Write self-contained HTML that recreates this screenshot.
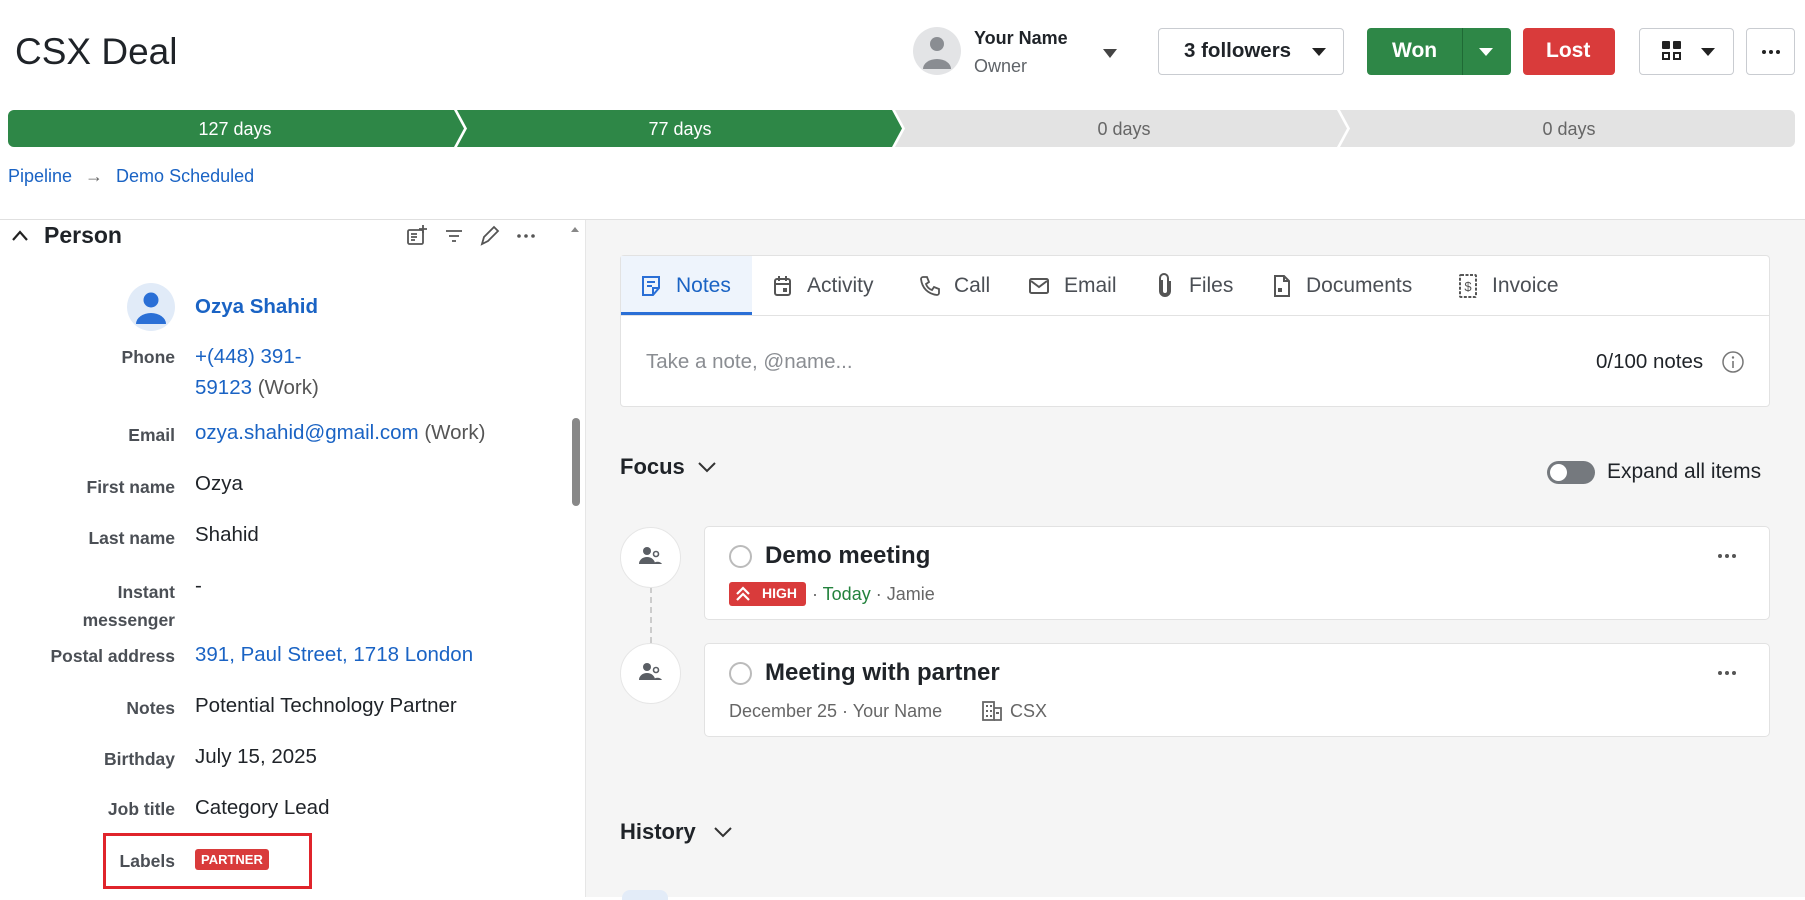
<!DOCTYPE html>
<html><head><meta charset="utf-8"><style>
*{box-sizing:border-box;margin:0;padding:0}
body{width:1805px;height:897px;overflow:hidden;font-family:"Liberation Sans",Arial,sans-serif;background:#fff;position:relative;color:#1f2328}
.a{position:absolute}
.btn{position:absolute;border:1px solid #c9ccd1;border-radius:4px;background:#fff}
.lbl{position:absolute;right:1630px;width:200px;text-align:right;font-size:17.5px;color:#4b4f55;font-weight:bold}
.val{position:absolute;left:195px;font-size:20.5px;color:#1f2328}
.blue{color:#1a63c4}
.tab{position:absolute;top:274px;font-size:21px;color:#4b4f55}
svg.i{position:absolute}
</style></head><body>
<div class="a" style="left:15px;top:31px;font-size:37px;color:#1f2328">CSX Deal</div>

<svg class="i" style="left:913px;top:27px" width="48" height="48" viewBox="0 0 48 48"><circle cx="24" cy="24" r="24" fill="#e3e4e6"/><circle cx="24" cy="17" r="7" fill="#8a8d92"/><path d="M10 42a14 10 0 0 1 28 0z" fill="#8a8d92"/></svg>
<div class="a" style="left:974px;top:28px;font-size:18px;font-weight:bold;color:#1f2328">Your Name</div>
<div class="a" style="left:974px;top:56px;font-size:18px;color:#5f6368">Owner</div>
<div class="a" style="left:1103px;top:49px;border-left:7px solid transparent;border-right:7px solid transparent;border-top:9px solid #444"></div>

<div class="btn" style="left:1158px;top:28px;width:186px;height:47px"></div>
<div class="a" style="left:1184px;top:39px;font-size:20.5px;font-weight:bold">3 followers</div>
<div class="a" style="left:1312px;top:48px;border-left:7px solid transparent;border-right:7px solid transparent;border-top:8px solid #222"></div>

<div class="a" style="left:1367px;top:28px;width:144px;height:47px;background:#2e8747;border-radius:4px"></div>
<div class="a" style="left:1462px;top:28px;width:1px;height:47px;background:#1f6a35"></div>
<div class="a" style="left:1392px;top:39px;font-size:21px;font-weight:bold;color:#fff">Won</div>
<div class="a" style="left:1479px;top:48px;border-left:7px solid transparent;border-right:7px solid transparent;border-top:8px solid #fff"></div>
<div class="a" style="left:1523px;top:28px;width:92px;height:47px;background:#d93b3b;border-radius:4px"></div>
<div class="a" style="left:1546px;top:39px;font-size:21px;font-weight:bold;color:#fff">Lost</div>

<div class="btn" style="left:1639px;top:28px;width:95px;height:47px"></div>
<svg class="i" style="left:1661px;top:40px" width="22" height="22" viewBox="0 0 22 22"><rect x="1" y="1" width="8" height="8" rx="1" fill="#222"/><rect x="12" y="1" width="8" height="8" rx="1" fill="#222"/><rect x="2" y="13" width="6" height="6" fill="none" stroke="#222" stroke-width="2"/><rect x="13" y="13" width="6" height="6" fill="none" stroke="#222" stroke-width="2"/></svg>
<div class="a" style="left:1701px;top:48px;border-left:7px solid transparent;border-right:7px solid transparent;border-top:8px solid #222"></div>
<div class="btn" style="left:1746px;top:28px;width:49px;height:47px"></div>
<svg class="i" style="left:1761px;top:49px" width="20" height="6" viewBox="0 0 20 6"><circle cx="3" cy="3" r="2" fill="#222"/><circle cx="10" cy="3" r="2" fill="#222"/><circle cx="17" cy="3" r="2" fill="#222"/></svg>

<svg class="i" style="left:8px;top:110px" width="1788" height="37" viewBox="0 0 1788 37">
<path d="M6 0H446L456 18.5L446 37H6A6 6 0 0 1 0 31V6A6 6 0 0 1 6 0Z" fill="#2e8747"/>
<path d="M449 0H884L894 18.5L884 37H449L459 18.5Z" fill="#2e8747"/>
<path d="M887 0H1329L1339 18.5L1329 37H887L897 18.5Z" fill="#e3e3e3"/>
<path d="M1332 0H1781A6 6 0 0 1 1787 6V31A6 6 0 0 1 1781 37H1332L1342 18.5Z" fill="#e3e3e3"/>
<text x="227" y="25" font-size="18" fill="#fff" text-anchor="middle" font-family="Liberation Sans">127 days</text>
<text x="672" y="25" font-size="18" fill="#fff" text-anchor="middle" font-family="Liberation Sans">77 days</text>
<text x="1116" y="25" font-size="18" fill="#666" text-anchor="middle" font-family="Liberation Sans">0 days</text>
<text x="1561" y="25" font-size="18" fill="#666" text-anchor="middle" font-family="Liberation Sans">0 days</text>
</svg>
<div class="a" style="left:8px;top:166px;font-size:18px;color:#1a63c4">Pipeline <span style="color:#666;margin:0 8px">→</span> Demo Scheduled</div>

<div class="a" style="left:0;top:219px;width:1805px;height:1px;background:#e0e0e0"></div>
<div class="a" style="left:585px;top:220px;width:1220px;height:677px;background:#f5f5f5;border-left:1px solid #e6e6e6"></div>

<!-- left panel -->
<svg class="i" style="left:10px;top:227px" width="20" height="16" viewBox="0 0 20 16"><path d="M3 13L10 5L17 13" fill="none" stroke="#222" stroke-width="2.2"/></svg>
<div class="a" style="left:44px;top:222px;font-size:23px;font-weight:bold">Person</div>
<svg class="i" style="left:406px;top:224px" width="135" height="24" viewBox="0 0 135 24">
<g fill="none" stroke="#555" stroke-width="1.8"><rect x="2" y="6" width="15" height="14" rx="1.5"/><path d="M5 10h6M5 13h6M5 16h4M17 1v8M13 5h8"/>
<path d="M40 7h16M43 12h10M46 17h4"/>
<path d="M76 20l2-7 10-10 4 4-10 10z"/></g>
<circle cx="113" cy="12" r="1.8" fill="#555"/><circle cx="120" cy="12" r="1.8" fill="#555"/><circle cx="127" cy="12" r="1.8" fill="#555"/></svg>
<div class="a" style="left:571px;top:227px;border-left:4px solid transparent;border-right:4px solid transparent;border-bottom:5px solid #888"></div>
<div class="a" style="left:572px;top:418px;width:8px;height:88px;background:#888;border-radius:4px"></div>

<svg class="i" style="left:127px;top:283px" width="48" height="48" viewBox="0 0 48 48"><circle cx="24" cy="24" r="24" fill="#e1ebf8"/><circle cx="24" cy="17" r="7.5" fill="#2a6fd6"/><path d="M9 41a15 11 0 0 1 30 0z" fill="#2a6fd6"/></svg>
<div class="val blue" style="top:295px;font-weight:bold;font-size:20.5px">Ozya Shahid</div>
<div class="lbl" style="top:347px">Phone</div>
<div class="val" style="top:341px;line-height:31px"><span class="blue">+(448) 391-<br>59123</span> <span style="color:#555">(Work)</span></div>
<div class="lbl" style="top:425px">Email</div>
<div class="val" style="top:421px"><span class="blue">ozya.shahid@gmail.com</span> <span style="color:#555">(Work)</span></div>
<div class="lbl" style="top:477px">First name</div><div class="val" style="top:472px">Ozya</div>
<div class="lbl" style="top:528px">Last name</div><div class="val" style="top:523px">Shahid</div>
<div class="lbl" style="top:578px;line-height:28px">Instant<br>messenger</div><div class="val" style="top:574px">-</div>
<div class="lbl" style="top:646px">Postal address</div><div class="val blue" style="top:643px">391, Paul Street, 1718 London</div>
<div class="lbl" style="top:698px">Notes</div><div class="val" style="top:694px">Potential Technology Partner</div>
<div class="lbl" style="top:749px">Birthday</div><div class="val" style="top:745px">July 15, 2025</div>
<div class="lbl" style="top:799px">Job title</div><div class="val" style="top:796px">Category Lead</div>
<div class="lbl" style="top:851px">Labels</div>
<div class="a" style="left:195px;top:849px;background:#d93b3b;color:#fff;font-size:13px;font-weight:bold;padding:3px 6px;border-radius:3px">PARTNER</div>
<div class="a" style="left:103px;top:833px;width:209px;height:56px;border:3px solid #e0242b"></div>

<!-- notes card -->
<div class="a" style="left:620px;top:255px;width:1150px;height:152px;background:#fff;border:1px solid #e2e2e2;border-radius:4px"></div>
<div class="a" style="left:621px;top:256px;width:131px;height:59px;background:#eef4fc;border-bottom:3px solid #2a6fd6"></div>
<div class="a" style="left:621px;top:315px;width:1148px;height:1px;background:#e2e2e2"></div>
<svg class="i" style="left:639px;top:274px" width="24" height="24" viewBox="0 0 24 24"><path d="M4 3h16v11l-6 7H4z M14 21v-7h6" fill="none" stroke="#2a6fd6" stroke-width="2"/><path d="M8 8h8M8 12h5" stroke="#2a6fd6" stroke-width="2"/></svg>
<div class="tab" style="left:676px;color:#1a63c4">Notes</div>
<svg class="i" style="left:771px;top:274px" width="24" height="24" viewBox="0 0 24 24"><g fill="none" stroke="#555" stroke-width="2"><rect x="4" y="5" width="15" height="16" rx="2"/><path d="M4 10h15M8 2v5M15 2v5"/></g><rect x="12" y="14" width="4" height="4" fill="#555"/></svg>
<div class="tab" style="left:807px">Activity</div>
<svg class="i" style="left:918px;top:274px" width="24" height="24" viewBox="0 0 24 24"><path d="M5 3l4 0 2 5-3 2c1 3 3 5 6 6l2-3 5 2v4c0 1-1 2-2 2C10 20 4 14 3 5c0-1 1-2 2-2z" fill="none" stroke="#555" stroke-width="1.8"/></svg>
<div class="tab" style="left:954px">Call</div>
<svg class="i" style="left:1027px;top:274px" width="24" height="24" viewBox="0 0 24 24"><g fill="none" stroke="#555" stroke-width="2"><rect x="3" y="5" width="18" height="14" rx="1.5"/><path d="M4 7l8 6 8-6"/></g></svg>
<div class="tab" style="left:1064px">Email</div>
<svg class="i" style="left:1153px;top:273px" width="24" height="26" viewBox="0 0 24 26"><path d="M9 7v11a3 3 0 0 0 6 0V5a4 4 0 0 0-8 0v13a5 5 0 0 0 10 0V8" fill="none" stroke="#555" stroke-width="2"/></svg>
<div class="tab" style="left:1189px">Files</div>
<svg class="i" style="left:1270px;top:274px" width="24" height="24" viewBox="0 0 24 24"><path d="M5 2h9l5 5v15H5z M14 2v5h5" fill="none" stroke="#555" stroke-width="2"/><rect x="8" y="14" width="4" height="4" fill="#555"/></svg>
<div class="tab" style="left:1306px">Documents</div>
<svg class="i" style="left:1456px;top:273px" width="24" height="26" viewBox="0 0 24 26"><rect x="4" y="2" width="16" height="22" rx="1" fill="none" stroke="#555" stroke-width="2" stroke-dasharray="3 1.5"/><text x="12" y="18" font-size="13" text-anchor="middle" fill="#555" font-family="Liberation Sans">$</text></svg>
<div class="tab" style="left:1492px">Invoice</div>
<div class="a" style="left:646px;top:350px;font-size:20.5px;color:#8a8d92">Take a note, @name...</div>
<div class="a" style="left:1596px;top:350px;font-size:20.5px;color:#1f2328">0/100 notes</div>
<svg class="i" style="left:1721px;top:350px" width="24" height="24" viewBox="0 0 24 24"><circle cx="12" cy="12" r="10" fill="none" stroke="#777" stroke-width="1.5"/><circle cx="12" cy="7.5" r="1.2" fill="#777"/><path d="M12 11v7" stroke="#777" stroke-width="1.6"/></svg>

<!-- focus -->
<div class="a" style="left:620px;top:454px;font-size:22px;font-weight:bold">Focus</div>
<svg class="i" style="left:696px;top:459px" width="22" height="16" viewBox="0 0 22 16"><path d="M3 4l8 8 8-8" fill="none" stroke="#333" stroke-width="2"/></svg>
<div class="a" style="left:1547px;top:461px;width:48px;height:23px;background:#75797e;border-radius:12px"></div>
<div class="a" style="left:1550px;top:464px;width:17px;height:17px;background:#fff;border-radius:50%"></div>
<div class="a" style="left:1607px;top:460px;font-size:21px">Expand all items</div>

<div class="a" style="left:650px;top:587px;width:0;height:56px;border-left:2px dashed #ccc"></div>
<div class="a" style="left:620px;top:527px;width:61px;height:61px;border-radius:50%;background:#fff;border:1px solid #e6e6e6"></div>
<div class="a" style="left:620px;top:643px;width:61px;height:61px;border-radius:50%;background:#fff;border:1px solid #e6e6e6"></div>
<svg class="i" style="left:639px;top:546px" width="24" height="20" viewBox="0 0 24 20"><circle cx="8" cy="5" r="4" fill="#5a5e64"/><path d="M0 18a8 7 0 0 1 16 0z" fill="#5a5e64"/><circle cx="17" cy="8" r="2.5" fill="none" stroke="#5a5e64" stroke-width="1.6"/><path d="M14 18a5 4 0 0 1 9 0z" fill="#5a5e64"/></svg>
<svg class="i" style="left:639px;top:662px" width="24" height="20" viewBox="0 0 24 20"><circle cx="8" cy="5" r="4" fill="#5a5e64"/><path d="M0 18a8 7 0 0 1 16 0z" fill="#5a5e64"/><circle cx="17" cy="8" r="2.5" fill="none" stroke="#5a5e64" stroke-width="1.6"/><path d="M14 18a5 4 0 0 1 9 0z" fill="#5a5e64"/></svg>

<div class="a" style="left:704px;top:526px;width:1066px;height:94px;background:#fff;border:1px solid #e2e2e2;border-radius:5px"></div>
<div class="a" style="left:729px;top:545px;width:23px;height:23px;border:2.5px solid #bbb;border-radius:50%"></div>
<div class="a" style="left:765px;top:542px;font-size:24px;font-weight:bold">Demo meeting</div>
<svg class="i" style="left:1717px;top:553px" width="20" height="6" viewBox="0 0 20 6"><circle cx="3" cy="3" r="2" fill="#555"/><circle cx="10" cy="3" r="2" fill="#555"/><circle cx="17" cy="3" r="2" fill="#555"/></svg>
<div class="a" style="left:729px;top:582px;width:77px;height:24px;background:#d93b3b;border-radius:3px"></div>
<svg class="i" style="left:734px;top:585px" width="18" height="18" viewBox="0 0 18 18"><path d="M3 9l6-6 6 6M3 15l6-6 6 6" fill="none" stroke="#fff" stroke-width="2.2"/></svg>
<div class="a" style="left:762px;top:585px;font-size:14px;font-weight:bold;color:#fff">HIGH</div>
<div class="a" style="left:812px;top:584px;font-size:18px;color:#666">· <span style="color:#23823d">Today</span> · Jamie</div>

<div class="a" style="left:704px;top:643px;width:1066px;height:94px;background:#fff;border:1px solid #e2e2e2;border-radius:5px"></div>
<div class="a" style="left:729px;top:662px;width:23px;height:23px;border:2.5px solid #bbb;border-radius:50%"></div>
<div class="a" style="left:765px;top:659px;font-size:24px;font-weight:bold">Meeting with partner</div>
<svg class="i" style="left:1717px;top:670px" width="20" height="6" viewBox="0 0 20 6"><circle cx="3" cy="3" r="2" fill="#555"/><circle cx="10" cy="3" r="2" fill="#555"/><circle cx="17" cy="3" r="2" fill="#555"/></svg>
<div class="a" style="left:729px;top:701px;font-size:18px;color:#666">December 25 · Your Name</div>
<svg class="i" style="left:981px;top:700px" width="22" height="22" viewBox="0 0 22 22"><g fill="none" stroke="#666" stroke-width="1.8"><rect x="2" y="2" width="11" height="18"/><path d="M13 8h7v12h-7"/></g><g fill="#666"><rect x="5" y="5" width="2" height="2"/><rect x="9" y="5" width="2" height="2"/><rect x="5" y="10" width="2" height="2"/><rect x="9" y="10" width="2" height="2"/><rect x="5" y="15" width="2" height="2"/><rect x="9" y="15" width="2" height="2"/><rect x="15" y="12" width="3" height="2"/></g></svg>
<div class="a" style="left:1010px;top:701px;font-size:18px;color:#666">CSX</div>

<div class="a" style="left:620px;top:819px;font-size:22px;font-weight:bold">History</div>
<svg class="i" style="left:712px;top:824px" width="22" height="16" viewBox="0 0 22 16"><path d="M3 4l8 8 8-8" fill="none" stroke="#333" stroke-width="2"/></svg>
<div class="a" style="left:622px;top:890px;width:46px;height:10px;background:#e3ecf8;border-radius:8px 8px 0 0"></div>
</body></html>
